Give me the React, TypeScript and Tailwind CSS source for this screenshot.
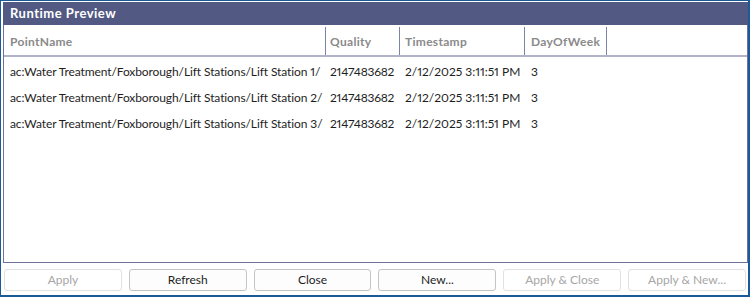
import React from "react";

const rows = [1, 2, 3].map((n) => ({
  point: `ac:Water Treatment/Foxborough/Lift Stations/Lift Station ${n}/`,
  quality: "2147483682",
  ts: "2/12/2025 3:11:51 PM",
  dow: "3",
}));

const buttons = [
  { label: "Apply", disabled: true },
  { label: "Refresh", disabled: false },
  { label: "Close", disabled: false },
  { label: "New...", disabled: false },
  { label: "Apply & Close", disabled: true },
  { label: "Apply & New...", disabled: true },
];

export default function App() {
  return (
    <div
      className="w-[750px] h-[297px] bg-white border-[#1b5a99] border-l border-t border-r-2 border-b-2 pl-[2px] pt-[1px] flex flex-col text-[12px] proportional-nums"
      style={{ fontFamily: "Lato, 'Liberation Sans', sans-serif" }}
    >
      <div className="h-[23px] bg-[#525a83] text-white font-bold text-[13px] tracking-[0.5px] flex items-center pl-[7px] shrink-0">
        Runtime Preview
      </div>
      <div className="flex-1 border-l border-r border-b border-[#6c7396] pt-[2px] flex flex-col">
        <div className="grid grid-cols-[322px_74px_125px_82px_1fr] h-[30px] border-b-2 border-[#b1b4c8] font-bold text-[#8a8a8a] tracking-[0.3px]">
          <div className="border-r border-[#7c83a8] flex items-center pl-[6px] pt-[1px]">PointName</div>
          <div className="border-r border-[#7c83a8] flex items-center pl-[4px] pt-[1px]">Quality</div>
          <div className="border-r border-[#7c83a8] flex items-center pl-[5px] pt-[1px]">Timestamp</div>
          <div className="border-r border-[#7c83a8] flex items-center pl-[6px] pt-[1px]">DayOfWeek</div>
          <div />
        </div>
        <div className="mt-[2px] text-[#1e1e1e]">
          {rows.map((r) => (
            <div key={r.point} className="grid grid-cols-[322px_74px_125px_82px_1fr] h-[26px] items-center">
              <div className="pl-[6px] whitespace-nowrap tracking-[-0.1px]">{r.point}</div>
              <div className="pl-[4px] tracking-[-0.2px]">{r.quality}</div>
              <div className="pl-[5px] whitespace-nowrap">{r.ts}</div>
              <div className="pl-[6px]">{r.dow}</div>
              <div />
            </div>
          ))}
        </div>
      </div>
      <div className="h-[32px] shrink-0 flex gap-[7px] pt-[6px] pb-[4px] pl-[1px] pr-[2px]">
        {buttons.map((b) => (
          <div
            key={b.label}
            className={
              b.disabled
                ? "flex-1 h-[22px] rounded-[3px] border border-[#e1e1e1] bg-white text-[#a6a6a6] flex items-center justify-center"
                : "flex-1 h-[22px] rounded-[3px] border border-[#c4c4c4] bg-[#fdfdfd] text-[#1e1e1e] flex items-center justify-center"
            }
          >
            {b.label}
          </div>
        ))}
      </div>
    </div>
  );
}
